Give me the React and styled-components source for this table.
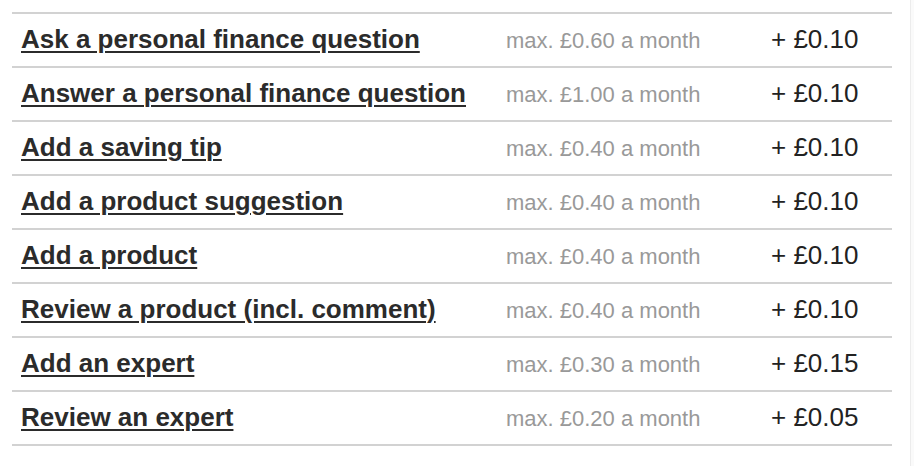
import React from "react";
import styled, { createGlobalStyle } from "styled-components";

const Global = createGlobalStyle`
  html, body { margin: 0; padding: 0; background: #ffffff; }
  body { font-family: "Liberation Sans", Arial, Helvetica, sans-serif; }
`;

const Page = styled.div`
  display: flex;
  width: 914px;
  height: 466px;
  box-sizing: border-box;
`;

const Main = styled.div`
  flex: 1;
  padding: 12px 0 0 12px;
`;

const Track = styled.div`
  width: 3px;
  background: #fafafa;
  border-left: 1px solid #ececec;
`;

const Table = styled.div`
  width: 880px;
  display: flex;
  flex-direction: column;
  border-top: 2px solid #d2d2d2;
`;

const Row = styled.div`
  display: grid;
  grid-template-columns: 485px 265px 1fr;
  align-items: baseline;
  height: 54px;
  box-sizing: border-box;
  padding-top: 12px;
  border-bottom: 2px solid #d2d2d2;
`;

const Cell = styled.div`
  padding-left: 9px;
  line-height: 26px;
  white-space: nowrap;
`;

const Link = styled.a`
  font-size: 26px;
  font-weight: bold;
  color: #2b2b2b;
  text-decoration: underline;
  text-decoration-thickness: 2px;
  text-underline-offset: 3px;
  cursor: pointer;
`;

const Limit = styled.span`
  font-size: 22px;
  color: #999999;
`;

const Reward = styled.span`
  font-size: 26px;
  color: #222222;
`;

const rows = [
  ["Ask a personal finance question", "max. £0.60 a month", "+ £0.10"],
  ["Answer a personal finance question", "max. £1.00 a month", "+ £0.10"],
  ["Add a saving tip", "max. £0.40 a month", "+ £0.10"],
  ["Add a product suggestion", "max. £0.40 a month", "+ £0.10"],
  ["Add a product", "max. £0.40 a month", "+ £0.10"],
  ["Review a product (incl. comment)", "max. £0.40 a month", "+ £0.10"],
  ["Add an expert", "max. £0.30 a month", "+ £0.15"],
  ["Review an expert", "max. £0.20 a month", "+ £0.05"],
];

export default function App() {
  return (
    <>
      <Global />
      <Page>
        <Main>
          <Table>
            {rows.map(([label, limit, reward]) => (
              <Row key={label}>
                <Cell>
                  <Link>{label}</Link>
                </Cell>
                <Cell>
                  <Limit>{limit}</Limit>
                </Cell>
                <Cell>
                  <Reward>{reward}</Reward>
                </Cell>
              </Row>
            ))}
          </Table>
        </Main>
        <Track />
      </Page>
    </>
  );
}
